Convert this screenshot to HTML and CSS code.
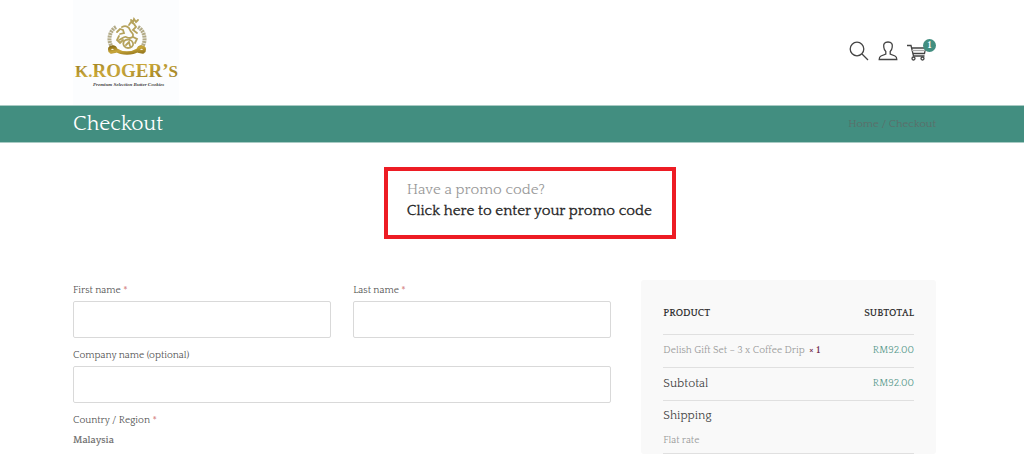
FILE: index.html
```html
<!DOCTYPE html>
<html lang="en">
<head>
  <meta charset="UTF-8">
  <meta name="viewport" content="width=device-width, initial-scale=1.0">
  <title>Checkout - K.Roger's</title>
  <link rel="stylesheet" href="styles.css">
</head>
<body>

  <header class="header">
    <a href="#" class="logo" aria-label="K.Roger's home">
      <svg class="logo-img" viewBox="0 0 106 105">
        <defs>
          <linearGradient id="gold" x1="0" y1="0" x2="1" y2="1">
            <stop offset="0" stop-color="#8d7119"/>
            <stop offset="0.45" stop-color="#c9a73a"/>
            <stop offset="1" stop-color="#94761c"/>
          </linearGradient>
        </defs>
        <!-- laurel -->
        <g fill="none" stroke="#b3ab88">
          <path stroke-width="4" stroke-dasharray="2 0.7" d="M43 27C36 31 34 42 40 48M65 27C72 31 74 42 68 48"/>
        </g>
        <!-- lion and shield -->
        <g fill="none" stroke="#b5a25c" stroke-width="1.8" stroke-linecap="round">
          <path d="M44 32l3-3 3 1 1 3-4 1M49 27c4-2 7 0 8 3s4 3 3 6-5 2-7 1-4 2-7 3"/>
          <path d="M56 25l2-3 3 2 2 3-3 3 4 3M58 20l2 2 1-3 2 3 2-2"/>
          <path d="M60 37l4 2-2 4M46 36l-2 4 3 3 3-3"/>
          <path d="M51 41c4-3 8-1 9 2s-2 5-5 5-6-3-4-7zM53 45l3-3 1 4"/>
        </g>
        <!-- ribbon -->
        <path fill="none" stroke="url(#gold)" stroke-width="3.500" stroke-linecap="round" d="M37 51c-2-5 5-5 6-1 6 4 16 4 22 0 1-4 8-4 6 1M38 52l5-1M70 52l-5-1"/>
        <text class="logo-name" x="2" y="77" fill="url(#gold)"><tspan class="logo-small">K.</tspan>ROGER’<tspan class="logo-small">S</tspan></text>
        <text class="logo-tag" x="20" y="86">Premium Selection Butter Cookies</text>
      </svg>
    </a>
    <nav class="tools" aria-label="Account">
      <a href="#" aria-label="Search">
        <svg class="icon" viewBox="0 0 20 20"><circle cx="8" cy="8" r="6.8"/><path d="M13 13l6 6"/></svg>
      </a>
      <a href="#" aria-label="My account">
        <svg class="icon" viewBox="0 0 20 20"><path d="M10 1C6.500 1 5.200 3.200 5.800 6.200 6 8.500 7 9.700 7.800 10.500V13L3 15C1.600 15.700 1.200 17 1.200 18.500H18.800C18.800 17 18.400 15.700 17 15L12.200 13V10.500C13 9.700 14 8.500 14.200 6.200 14.800 3.200 13.500 1 10 1Z"/></svg>
      </a>
      <a href="#" class="cart" aria-label="Cart">
        <svg class="icon" viewBox="0 0 20 20"><path d="M0 4.500h4l2.500 10.500h11M4.500 7h14l-1 5.500H6"/><path stroke="#aaa" d="M5 9.500h13"/><circle cx="6.500" cy="17.500" r="1.500"/><circle cx="15.500" cy="17.500" r="1.500"/></svg>
        <span class="badge">1</span>
      </a>
    </nav>
  </header>

  <div class="title-bar">
    <h1>Checkout</h1>
    <div class="breadcrumb"><a href="#">Home</a> / <span>Checkout</span></div>
  </div>

  <main class="content">
    <div class="promo">
      Have a promo code?<br>
      <a href="#">Click here to enter your promo code</a>
    </div>

    <div class="columns">
      <form class="billing">
        <div class="field">
          <label for="first-name">First name <span class="required">*</span></label>
          <input type="text" id="first-name">
        </div>
        <div class="field">
          <label for="last-name">Last name <span class="required">*</span></label>
          <input type="text" id="last-name">
        </div>
        <div class="field wide">
          <label for="company">Company name (optional)</label>
          <input type="text" id="company">
        </div>
        <div class="field wide">
          <div class="label">Country / Region <span class="required">*</span></div>
          <strong class="country">Malaysia</strong>
        </div>
      </form>

      <section class="order">
        <table>
          <thead>
            <tr><th>PRODUCT</th><th class="amount">SUBTOTAL</th></tr>
          </thead>
          <tbody>
            <tr><td>Delish Gift Set – 3 x Coffee Drip <strong class="qty">× 1</strong></td><td class="amount">RM92.00</td></tr>
            <tr><th class="total">Subtotal</th><td class="amount">RM92.00</td></tr>
            <tr><td colspan="2" class="shipping"><div class="total">Shipping</div><div>Flat rate</div></td></tr>
          </tbody>
        </table>
      </section>
    </div>
  </main>

</body>
</html>
```

FILE: styles.css
```css
* { box-sizing: border-box; }
body {
  margin: 0;
  font-family: Quattrocento, "Liberation Serif", serif;
  font-size: 10px;
  line-height: 16px;
  color: #555;
  background: #fff;
}
a { color: inherit; text-decoration: none; }

.header, .title-bar, .content { padding: 0 88px 0 73px; }

.header {
  display: flex;
  justify-content: space-between;
  align-items: center;
}
.logo { background: #fcfdfe; }
.logo-img { display: block; width: 106px; height: 105px; }
.logo-name { font-family: "Liberation Serif", serif; font-size: 19px; font-weight: bold; }
.logo-small { font-size: 17px; }
.logo-tag {
  font-family: "Liberation Serif", serif;
  font-size: 5px;
  font-style: italic;
  font-weight: bold;
  fill: #444;
}

.tools { display: flex; gap: 9px; padding-bottom: 4px; }
.icon {
  display: block;
  width: 20px;
  height: 20px;
  fill: none;
  stroke: #444;
  stroke-width: 1.3;
}
.cart { position: relative; padding-right: 9px; }
.badge {
  position: absolute;
  top: -2px;
  right: 0;
  width: 13px;
  height: 13px;
  border-radius: 50%;
  background: #428e80;
  color: #fff;
  font-weight: bold;
  line-height: 13px;
  text-align: center;
}

.title-bar {
  display: flex;
  justify-content: space-between;
  align-items: center;
  background: #428e80;
  border-top: 1px solid #a9cbc4;
  border-bottom: 1px solid #a9cbc4;
}
h1 {
  margin: 0;
  color: #fff;
  font-size: 21px;
  font-weight: normal;
  line-height: 36px;
}
.breadcrumb { color: #5c6d69; font-size: 11px; }

.promo {
  width: fit-content;
  margin: 24px 0 41px 36%;
  padding: 8px 20px 14px 19px;
  border: 4px solid #ed1c24;
  color: #999;
  font-size: 15px;
  line-height: 21px;
}
.promo a { color: #222; -webkit-text-stroke: 0.3px #222; }

.columns {
  display: grid;
  grid-template-columns: 539fr 295fr;
  gap: 30px;
}
.billing {
  display: grid;
  grid-template-columns: 1fr 1fr;
  align-content: start;
  gap: 10px 22px;
  padding-top: 3px;
}
.wide { grid-column: 1 / -1; }
label, .label { display: block; margin-bottom: 2px; }
.required { color: #c66; }
input {
  display: block;
  width: 100%;
  height: 37px;
  padding: 0 10px;
  border: 1px solid #d9d9d9;
  border-radius: 2px;
  background: #fff;
  font: inherit;
}
.country { display: block; color: #777; line-height: 20px; }

.order { padding: 21px 22px 0; border-radius: 3px; background: #f9f9f9; }
table { width: 100%; border-collapse: collapse; }
th, td {
  height: 33px;
  padding: 0;
  border-bottom: 1px solid #e0e0e0;
  color: #999;
  font-weight: normal;
  text-align: left;
}
thead th {
  padding-bottom: 6px;
  color: #333;
  font-weight: bold;
}
th.amount, td.amount { text-align: right; }
tbody .amount { color: #5a9a8d; }
.qty { margin-left: 2px; color: #735; }
th.total, .total { color: #444; font-size: 12px; }
td.shipping { padding: 7px 0 4px; }
.shipping .total { margin-bottom: 9px; }
```
